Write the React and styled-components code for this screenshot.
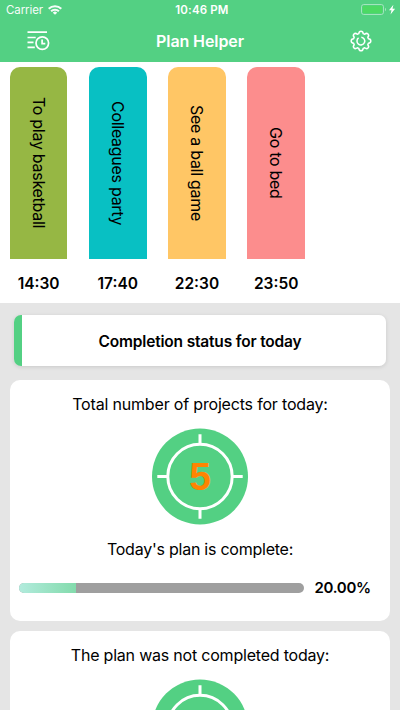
import styled, { createGlobalStyle } from "styled-components";

const plans = [
  { id: 1, title: "To play basketball", time: "14:30", color: "#96b744" },
  { id: 2, title: "Colleagues party", time: "17:40", color: "#08c0c3" },
  { id: 3, title: "See a ball game", time: "22:30", color: "#ffc665" },
  { id: 4, title: "Go to bed", time: "23:50", color: "#fc8d8d" },
];

const Target = ({ count }) => (
  <TargetSvg viewBox="0 0 96 97">
    <circle cx="48" cy="48.5" r="48" fill="#53d083" />
    <g fill="none" stroke="#fff" strokeWidth="3">
      <circle cx="48" cy="48.5" r="32.2" />
      <path d="M48 6.3v9.5M48 81.2v9.5M5.3 48.5h9.7M81 48.5h9.7" />
    </g>
    {count !== undefined && (
      <TargetCount x="48" y="62">
        {count}
      </TargetCount>
    )}
  </TargetSvg>
);

const App = () => {
  return (
    <Screen>
      <GlobalStyle />
      <StatusBar>
        <Carrier>
          <span>Carrier</span>
          <svg width="14" height="10" viewBox="0 0 14 10" fill="none" stroke="#fff" strokeWidth="2">
            <path d="M.7 3.8a8.8 8.8 0 0 1 12.6 0M3.1 6.3a5.4 5.4 0 0 1 7.8 0" />
            <path d="M7 9.8 4.8 7.8a3 3 0 0 1 4.4 0z" fill="#fff" stroke="none" />
          </svg>
        </Carrier>
        <Clock>10:46 PM</Clock>
        <Battery>
          <svg width="35" height="12" viewBox="0 0 35 12">
            <rect x=".5" y=".5" width="22" height="10" rx="2.3" fill="none" stroke="#a3e5bd" />
            <rect x="1.7" y="1.7" width="19.6" height="7.6" rx="1" fill="#4cd964" />
            <path d="M24 3.8c1.4.5 1.4 2.9 0 3.4z" fill="#a3e5bd" />
            <path d="M32.4.8 28 6.2h2.5l-1 4.2 4.6-5.6h-2.6z" fill="#fff" />
          </svg>
        </Battery>
      </StatusBar>

      <NavBar>
        <svg width="23" height="20" viewBox="0 0 23 20" fill="none" stroke="#fff" strokeWidth="1.7">
          <path d="M.5 1.2H20M.5 6.5h8.2M.5 11.4h6M.5 16.3h7.3" />
          <circle cx="15.3" cy="12.1" r="6.3" />
          <path d="M15.1 8.5v4.2h3.2" />
        </svg>
        <Title>Plan Helper</Title>
        <svg
          width="22"
          height="22"
          viewBox="0 0 22 22"
          fill="none"
          stroke="#fff"
          strokeWidth="1.5"
          strokeLinejoin="round"
        >
          <path d="M8.8 3.6Q9 1.2 11 1.2t2.2 2.4l1.5.6Q16.6 2.600 18 4t-.2 3.300l.6 1.500Q20.800 9 20.800 11t-2.400 2.200l-.6 1.500Q19.400 16.600 18 18t-3.300-.2l-1.500.6Q13 20.800 11 20.800t-2.200-2.400l-1.500-.6Q5.400 19.400 4 18t.2-3.300l-.6-1.500Q1.200 13 1.200 11t2.400-2.200l.6-1.500Q2.600 5.400 4 4t3.300.2z" />
          <path d="M11.3 7.2a3.900 3.900 0 1 1-2.700.7" />
        </svg>
      </NavBar>

      <Plans>
        {plans.map((plan) => (
          <Plan key={plan.id}>
            <PlanCard $color={plan.color}>
              <PlanTitle>{plan.title}</PlanTitle>
            </PlanCard>
            <PlanTime>{plan.time}</PlanTime>
          </Plan>
        ))}
      </Plans>

      <Content>
        <SectionTitle>Completion status for today</SectionTitle>
        <Card>
          <Label $spacing="-0.18px">Total number of projects for today:</Label>
          <Target count={5} />
          <Label $spacing="-0.24px">Today's plan is complete:</Label>
          <ProgressRow>
            <Track>
              <Fill style={{ width: "20%" }} />
            </Track>
            <Percent>20.00%</Percent>
          </ProgressRow>
        </Card>
        <Card>
          <Label $spacing="-0.21px">The plan was not completed today:</Label>
          <Target />
        </Card>
      </Content>
    </Screen>
  );
};

export default App;

const GlobalStyle = createGlobalStyle`
  body {
    margin: 0;
    overflow: hidden;
    font-family: Inter, "Liberation Sans", sans-serif;
    color: #000;
  }
`;

const Screen = styled.div`
  display: flex;
  flex-direction: column;
  width: 400px;
  height: 710px;
  overflow: hidden;
  background: #e5e5e5;
`;

const StatusBar = styled.div`
  display: grid;
  grid-template-columns: 1fr auto 1fr;
  align-items: center;
  flex: none;
  height: 20px;
  padding: 0 4px 0 6px;
  background: #53d083;
  color: #fff;
  font-size: 11.5px;
  line-height: 20px;
`;

const Carrier = styled.div`
  display: flex;
  align-items: center;
  gap: 5px;
  letter-spacing: -0.1px;
  opacity: 0.95;
`;

const Clock = styled.div`
  padding-left: 2px;
  font-weight: 600;
  letter-spacing: 0.15px;
`;

const Battery = styled.div`
  display: flex;
  justify-content: flex-end;
`;

const NavBar = styled.div`
  display: flex;
  align-items: center;
  justify-content: space-between;
  flex: none;
  box-sizing: border-box;
  height: 42px;
  padding: 0 28px 1px 27px;
  background: #53d083;
`;

const Title = styled.h1`
  margin: 0;
  color: #fff;
  font-size: 16px;
  font-weight: 600;
  letter-spacing: -0.1px;
`;

const Plans = styled.div`
  display: flex;
  gap: 21.4px;
  flex: none;
  box-sizing: border-box;
  height: 241px;
  padding: 4.5px 9.7px 0;
  background: #fff;
`;

const Plan = styled.div`
  display: flex;
  flex-direction: column;
  align-items: center;
  width: 57.8px;
`;

const PlanCard = styled.div`
  display: flex;
  align-items: center;
  justify-content: center;
  width: 100%;
  height: 192.5px;
  border-radius: 10px 10px 0 0;
  background: ${(props) => props.$color};
`;

const PlanTitle = styled.span`
  writing-mode: vertical-rl;
  white-space: nowrap;
  font-size: 16px;
  line-height: 20px;
  letter-spacing: -0.28px;
`;

const PlanTime = styled.div`
  margin-top: 14px;
  font-size: 15.5px;
  font-weight: 600;
  line-height: 22px;
`;

const Content = styled.div`
  display: flex;
  flex-direction: column;
  gap: 10px;
  padding: 12px 10px 0;
`;

const SectionTitle = styled.h2`
  box-sizing: border-box;
  height: 51px;
  margin: 0 4px 4px;
  border-radius: 7px;
  background: linear-gradient(to right, #53d083 7.7px, #fff 8px);
  box-shadow: 0 1px 4px rgba(0, 0, 0, 0.12);
  font-size: 15.5px;
  font-weight: 600;
  line-height: 54px;
  letter-spacing: -0.18px;
  text-align: center;
`;

const Card = styled.div`
  display: flex;
  flex-direction: column;
  align-items: center;
  flex: none;
  box-sizing: border-box;
  height: 241px;
  padding: 13px 9px 0;
  border-radius: 10px;
  background: #fff;
`;

const Label = styled.div`
  font-size: 16px;
  line-height: 22px;
  letter-spacing: ${(props) => props.$spacing};
  white-space: nowrap;
`;

const TargetSvg = styled.svg`
  flex: none;
  width: 96px;
  height: 97px;
  margin: 13px 0;
`;

const TargetCount = styled.text`
  fill: #ff8400;
  font-family: "Liberation Sans", sans-serif;
  font-size: 39px;
  font-weight: 700;
  text-anchor: middle;
`;

const ProgressRow = styled.div`
  display: flex;
  align-items: center;
  gap: 11px;
  width: 100%;
  margin-top: 17px;
`;

const Track = styled.div`
  width: 284.5px;
  height: 9.3px;
  overflow: hidden;
  border-radius: 5px;
  background: #9f9f9f;
`;

const Fill = styled.div`
  height: 100%;
  background: linear-gradient(to right, #b2ebdd, #83dbac);
`;

const Percent = styled.div`
  font-size: 15px;
  font-weight: 600;
  line-height: 22px;
  letter-spacing: -0.3px;
`;
